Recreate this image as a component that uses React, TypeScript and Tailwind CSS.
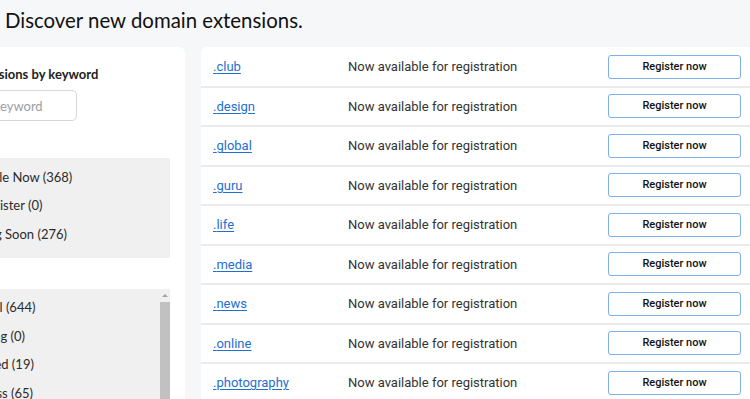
import React from 'react'

const tlds = ['club', 'design', 'global', 'guru', 'life', 'media', 'news', 'online', 'photography', 'store']

const statuses = ['Available Now (368)', 'Pre-register (0)', 'Coming Soon (276)']
const categories = ['General (644)', 'Trending (0)', 'Featured (19)', 'Business (65)', 'Technology (48)']

function FilterBox({ items, scroll }: { items: string[]; scroll?: boolean }) {
  return (
    <div className="relative bg-[#f0f0f0] pt-[5px] pb-[9px]">
      {items.map((item) => (
        <div key={item} className="h-[28.5px] flex items-center pl-[43px] text-[13px] text-[#2b2b2b]">
          {item}
        </div>
      ))}
      {scroll && (
        <div className="absolute right-0 top-0 bottom-0 w-[10px] flex flex-col items-center">
          <div className="h-[13px] flex items-center justify-center">
            <div className="w-0 h-0 border-l-[3px] border-r-[3px] border-b-[3px] border-l-transparent border-r-transparent border-b-[#a3a3a3]" />
          </div>
          <div className="flex-1 w-full bg-[#c1c1c1]" />
        </div>
      )}
    </div>
  )
}

export default function App() {
  return (
    <div className="h-[399px] w-[750px] overflow-hidden bg-[#f5f7f8] font-['Lato',sans-serif]">
      <h1 className="pl-[5px] pt-[6px] h-[47px] text-[20.4px] leading-[28px] text-[#111]">
        Discover new domain extensions.
      </h1>
      <div className="flex gap-4 items-start">
        <div className="-ml-[100px] w-[285px] shrink-0 h-[400px] bg-white rounded-tr-[6px] px-[15px] pt-[19px]">
          <p className="pl-[9px] text-[13px] font-bold leading-[16px] text-[#222]">Search extensions by keyword</p>
          <div className="relative mt-[8px] w-[162px]">
            <svg className="absolute left-[12px] top-[9px] w-[13px] h-[13px]" viewBox="0 0 24 24" fill="none" stroke="#777" strokeWidth="2">
              <circle cx="10" cy="10" r="7" />
              <line x1="15" y1="15" x2="21" y2="21" />
            </svg>
            <input
              className="w-full h-[31px] rounded-[5px] border border-[#d4d9dd] pl-[44px] pr-[8px] text-[13px] placeholder:text-[#9aa0a6] outline-none"
              placeholder="Enter keyword"
            />
          </div>
          <p className="mt-[10px] h-[27px] text-[13px] font-bold leading-[27px] text-[#222]">Status</p>
          <FilterBox items={statuses} />
          <p className="mt-[4px] h-[27px] text-[13px] font-bold leading-[27px] text-[#222]">Category</p>
          <FilterBox items={categories} scroll />
        </div>
        <div className="flex-1 min-w-[560px] bg-white rounded-tl-[6px] font-['Roboto',sans-serif]">
          {tlds.map((tld, i) => (
            <div
              key={tld}
              className={`${i === 0 ? 'h-[40.5px] pt-[1px]' : 'h-[39.5px]'} flex items-center border-b-2 border-[#ebebeb]`}
            >
              <a href="#" className="w-[147px] pl-[12px] text-[13px] text-[#1f6fd1] underline underline-offset-2">
                .{tld}
              </a>
              <span className="w-[260px] text-[13px] text-[#333]">Now available for registration</span>
              <button className="w-[133px] h-[24px] rounded-[3px] border border-[#7fb0e8] bg-white text-[11px] font-medium text-[#111]">
                Register now
              </button>
            </div>
          ))}
        </div>
      </div>
    </div>
  )
}
